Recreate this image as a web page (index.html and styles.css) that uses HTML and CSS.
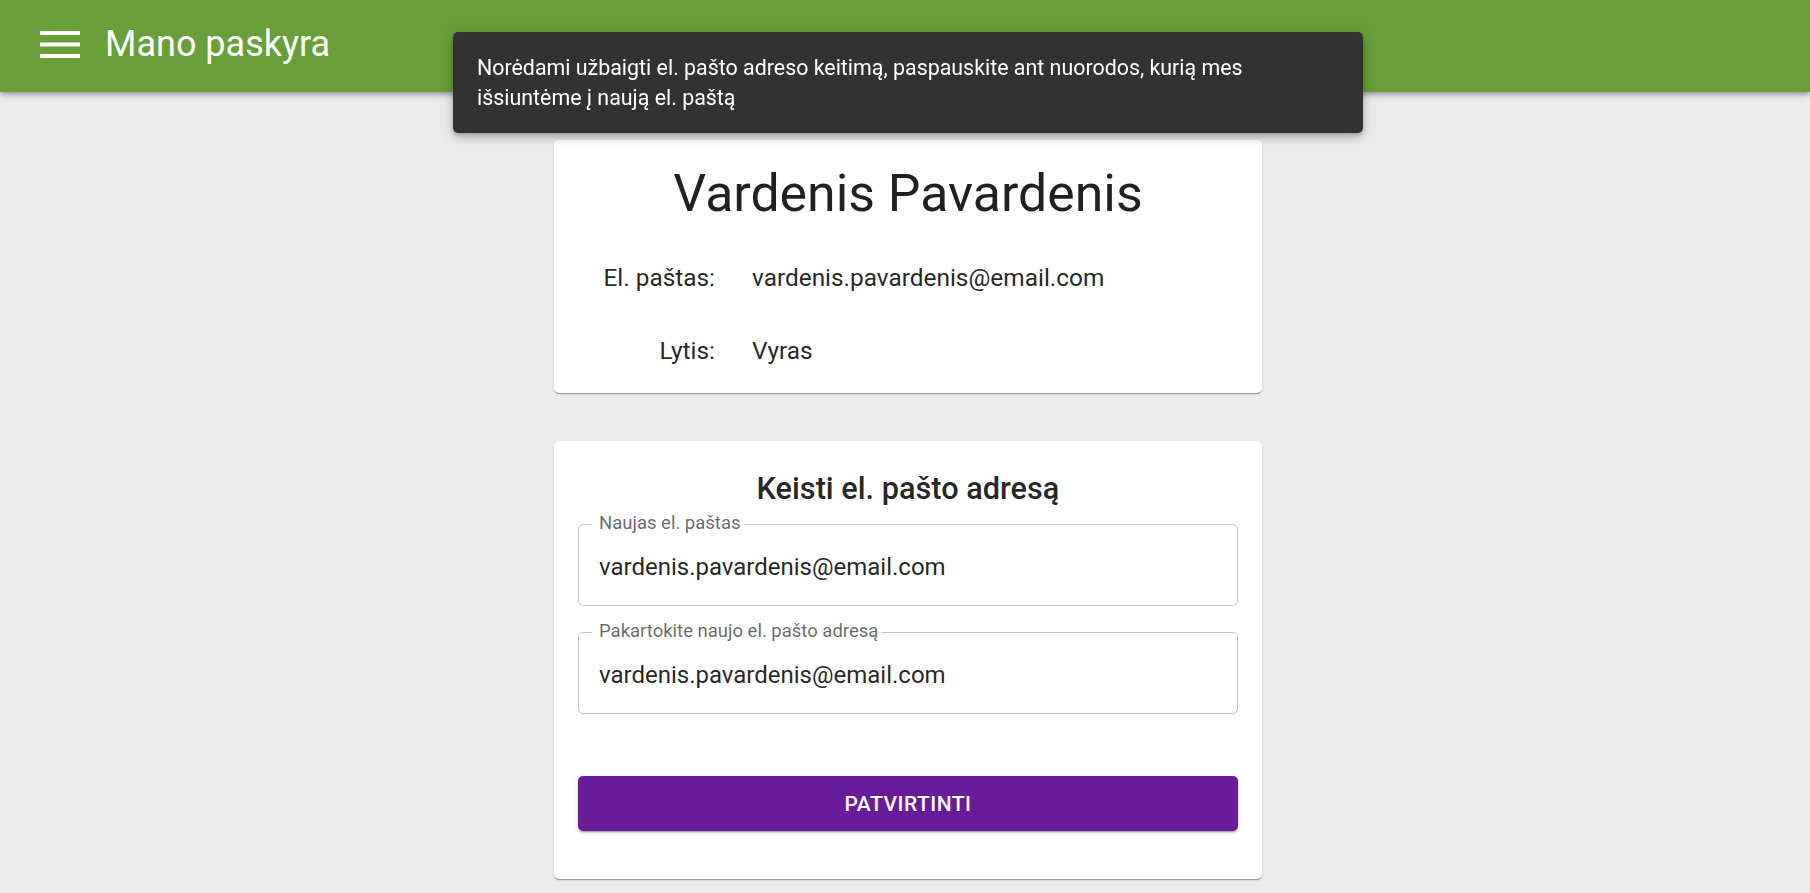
FILE: index.html
```html
<!DOCTYPE html>
<html lang="lt">
<head>
<meta charset="utf-8">
<title>Mano paskyra</title>
<link rel="stylesheet" href="styles.css">
</head>
<body>
<header class="appbar">
  <button class="menu-btn" aria-label="Meniu">
    <svg width="40" height="27" viewBox="0 0 40 27"><rect x="0" y="0" width="40" height="4" fill="#fff"/><rect x="0" y="11.5" width="40" height="4" fill="#fff"/><rect x="0" y="23" width="40" height="4" fill="#fff"/></svg>
  </button>
  <h1 class="appbar-title">Mano paskyra</h1>
</header>

<div class="snackbar" role="alert">
  <p class="snackbar-msg">Norėdami užbaigti el. pašto adreso keitimą, paspauskite ant nuorodos, kurią mes išsiuntėme į naują el. paštą</p>
</div>

<main class="content">
  <section class="card profile">
    <h2 class="name">Vardenis Pavardenis</h2>
    <dl class="info">
      <dt>El. paštas:</dt>
      <dd>vardenis.pavardenis@email.com</dd>
      <dt>Lytis:</dt>
      <dd>Vyras</dd>
    </dl>
  </section>

  <section class="card change">
    <h3 class="change-title">Keisti el. pašto adresą</h3>
    <div class="field field-first">
      <label>Naujas el. paštas</label>
      <span class="field-value">vardenis.pavardenis@email.com</span>
    </div>
    <div class="field field-second">
      <label>Pakartokite naujo el. pašto adresą</label>
      <span class="field-value">vardenis.pavardenis@email.com</span>
    </div>
    <button class="submit">Patvirtinti</button>
  </section>
</main>
</body>
</html>
```

FILE: styles.css
```css
* { box-sizing: border-box; }

html, body {
  margin: 0;
  padding: 0;
}

body {
  background: #ececec;
  font-family: Roboto, "Noto Sans", "Liberation Sans", sans-serif;
  color: rgba(0, 0, 0, 0.87);
  min-height: 893px;
}

.appbar {
  height: 92px;
  background: #689f38;
  color: #fff;
  display: flex;
  align-items: center;
  padding: 0 0 3px 40px;
  box-shadow: 0 2px 4px -1px rgba(0,0,0,0.2), 0 4px 5px 0 rgba(0,0,0,0.14), 0 1px 10px 0 rgba(0,0,0,0.12);
  position: relative;
  z-index: 2;
}

.menu-btn {
  background: none;
  border: 0;
  padding: 0;
  margin: 0 25px 0 0;
  width: 40px;
  height: 27px;
  display: block;
}

.menu-btn svg { display: block; }

.appbar-title {
  margin: 0;
  font-size: 36px;
  font-weight: 400;
  line-height: 1.2;
  letter-spacing: 0;
}

.snackbar {
  position: fixed;
  top: 32px;
  left: calc(50% + 3px);
  transform: translateX(-50%);
  width: 910px;
  background: #323232;
  color: #fff;
  border-radius: 5px;
  padding: 21px 24px 20px;
  z-index: 10;
  box-shadow: 0 3px 5px -1px rgba(0,0,0,0.2), 0 6px 10px 0 rgba(0,0,0,0.14), 0 1px 18px 0 rgba(0,0,0,0.12);
}

.snackbar-msg {
  margin: 0;
  max-width: 800px;
  font-size: 21.4px;
  line-height: 30px;
}

.content {
  display: flex;
  flex-direction: column;
  align-items: center;
  gap: 48px;
  padding: 48px 0 48px 6px;
}

.card {
  width: 708px;
  background: #fff;
  border-radius: 5px;
  box-shadow: 0 2px 1px -1px rgba(0,0,0,0.2), 0 1px 1px 0 rgba(0,0,0,0.14), 0 1px 3px 0 rgba(0,0,0,0.12);
}

.profile {
  padding: 23px 24px 6px;
}

.name {
  margin: 0 0 17px;
  text-align: center;
  font-size: 51.8px;
  font-weight: 400;
  line-height: 62px;
}

.info {
  margin: 0;
  display: grid;
  grid-template-columns: 137px 1fr;
  column-gap: 37px;
  font-size: 24.4px;
  line-height: 72.5px;
}

.info dt {
  text-align: right;
}

.info dd {
  margin: 0;
}

.change {
  padding: 30px 24px 48px;
  display: flex;
  flex-direction: column;
}

.change-title {
  margin: 0 0 18px;
  text-align: center;
  font-size: 30.7px;
  font-weight: 500;
  line-height: 1.15;
}

.field {
  position: relative;
  height: 82px;
  border: 1px solid #c4c4c4;
  border-radius: 5px;
  display: flex;
  align-items: center;
  padding: 4px 20px 0;
}

.field-second {
  margin-top: 26px;
}

.field label {
  position: absolute;
  top: -12px;
  left: 13px;
  padding: 0 3px 0 7px;
  background: #fff;
  font-size: 18.5px;
  line-height: 20px;
  color: rgba(0, 0, 0, 0.6);
  white-space: nowrap;
}

.field-value {
  font-size: 24px;
  line-height: 1.2;
  color: rgba(0, 0, 0, 0.87);
}

.submit {
  margin-top: 62px;
  height: 55px;
  border: 0;
  border-radius: 5px;
  background: #6a1b9a;
  color: #fff;
  font-family: Roboto, "Noto Sans", "Liberation Sans", sans-serif;
  font-size: 21px;
  font-weight: 500;
  letter-spacing: 0.5px;
  text-transform: uppercase;
  box-shadow: 0 3px 1px -2px rgba(0,0,0,0.2), 0 2px 2px 0 rgba(0,0,0,0.14), 0 1px 5px 0 rgba(0,0,0,0.12);
}
```
